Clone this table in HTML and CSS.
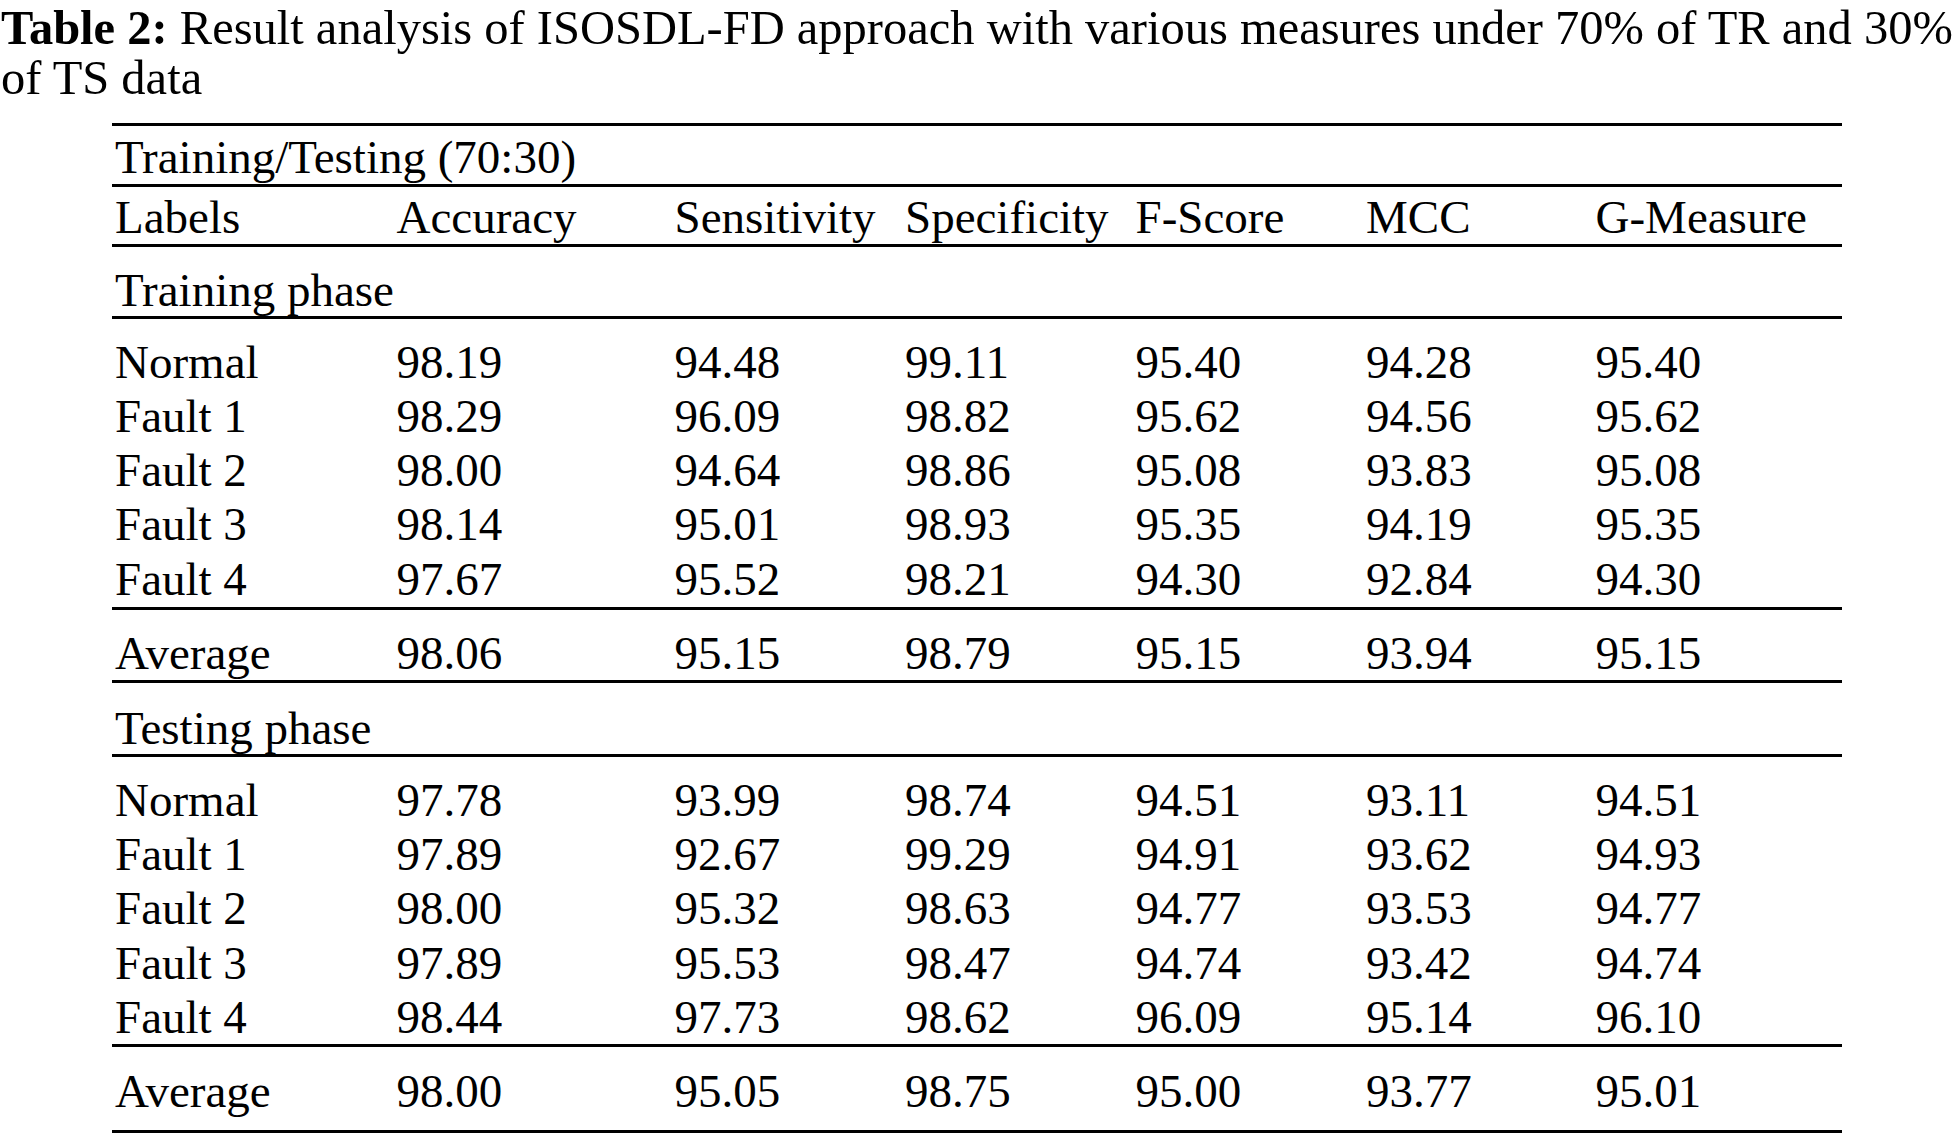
FILE: index.html
```html
<!DOCTYPE html>
<html lang="en">
<head>
<meta charset="utf-8">
<title>Table 2</title>
<link rel="stylesheet" href="styles.css">
</head>
<body>
<div class="page">
  <p class="caption"><b>Table 2:</b> Result analysis of ISOSDL-FD approach with various measures under 70% of TR and 30%<br>of TS data</p>
  <table class="results">
    <colgroup>
      <col class="c1"><col class="c2"><col class="c3"><col class="c4"><col class="c5"><col class="c6"><col class="c7">
    </colgroup>
    <tbody>
      <tr class="r-title ruled top-ruled"><td colspan="7">Training/Testing (70:30)</td></tr>
      <tr class="r-labels ruled"><td>Labels</td><td>Accuracy</td><td>Sensitivity</td><td>Specificity</td><td>F-Score</td><td>MCC</td><td>G-Measure</td></tr>
      <tr class="r-phase ruled"><td colspan="7">Training phase</td></tr>
      <tr class="r-first"><td>Normal</td><td>98.19</td><td>94.48</td><td>99.11</td><td>95.40</td><td>94.28</td><td>95.40</td></tr>
      <tr class="r-data"><td>Fault 1</td><td>98.29</td><td>96.09</td><td>98.82</td><td>95.62</td><td>94.56</td><td>95.62</td></tr>
      <tr class="r-data"><td>Fault 2</td><td>98.00</td><td>94.64</td><td>98.86</td><td>95.08</td><td>93.83</td><td>95.08</td></tr>
      <tr class="r-data"><td>Fault 3</td><td>98.14</td><td>95.01</td><td>98.93</td><td>95.35</td><td>94.19</td><td>95.35</td></tr>
      <tr class="r-last ruled"><td>Fault 4</td><td>97.67</td><td>95.52</td><td>98.21</td><td>94.30</td><td>92.84</td><td>94.30</td></tr>
      <tr class="r-avg ruled"><td>Average</td><td>98.06</td><td>95.15</td><td>98.79</td><td>95.15</td><td>93.94</td><td>95.15</td></tr>
      <tr class="r-phase2 ruled"><td colspan="7">Testing phase</td></tr>
      <tr class="r-first2"><td>Normal</td><td>97.78</td><td>93.99</td><td>98.74</td><td>94.51</td><td>93.11</td><td>94.51</td></tr>
      <tr class="r-data"><td>Fault 1</td><td>97.89</td><td>92.67</td><td>99.29</td><td>94.91</td><td>93.62</td><td>94.93</td></tr>
      <tr class="r-data"><td>Fault 2</td><td>98.00</td><td>95.32</td><td>98.63</td><td>94.77</td><td>93.53</td><td>94.77</td></tr>
      <tr class="r-data"><td>Fault 3</td><td>97.89</td><td>95.53</td><td>98.47</td><td>94.74</td><td>93.42</td><td>94.74</td></tr>
      <tr class="r-last2 ruled"><td>Fault 4</td><td>98.44</td><td>97.73</td><td>98.62</td><td>96.09</td><td>95.14</td><td>96.10</td></tr>
      <tr class="r-avg2 ruled"><td>Average</td><td>98.00</td><td>95.05</td><td>98.75</td><td>95.00</td><td>93.77</td><td>95.01</td></tr>
    </tbody>
  </table>
</div>
</body>
</html>
```

FILE: styles.css
```css
html, body {
  margin: 0;
  padding: 0;
  background: #ffffff;
}

.page {
  width: 1954px;
  color: #000000;
  font-family: "Liberation Serif", "Times New Roman", serif;
}

.caption {
  margin: 0;
  padding: 2.5px 0 0 1px;
  font-size: 48.5px;
  line-height: 50px;
  white-space: nowrap;
}

.caption b {
  font-weight: bold;
}

.results {
  margin: 20.5px 0 0 112px;
  width: 1730px;
  border-collapse: separate;
  border-spacing: 0;
  table-layout: fixed;
  font-size: 47px;
  line-height: 54.2px;
}

.c1 { width: 281.5px; }
.c2 { width: 278px; }
.c3 { width: 230.5px; }
.c4 { width: 230.5px; }
.c5 { width: 230.5px; }
.c6 { width: 229.5px; }
.c7 { width: 249.5px; }

.results td {
  padding: 0 0 0 3px;
  white-space: nowrap;
  vertical-align: top;
}

.ruled td { border-bottom: 3px solid #000000; }
.top-ruled td { border-top: 3px solid #000000; }

.r-title td  { padding-top: 3.8px; padding-bottom: 0; }
.r-labels td { padding-top: 2.8px; padding-bottom: 0; }
.r-phase td  { padding-top: 17px; padding-bottom: 0; line-height: 52px; }
.r-first td  { padding-top: 15.7px; }
.r-last td   { padding-bottom: 1.4px; }
.r-avg td    { padding-top: 16.5px; padding-bottom: 0; line-height: 53.5px; }
.r-phase2 td { padding-top: 18.8px; padding-bottom: 0.2px; line-height: 52px; }
.r-first2 td { padding-top: 15.9px; }
.r-last2 td  { padding-bottom: 0.5px; }
.r-avg2 td   { padding-top: 16.9px; padding-bottom: 11.9px; }
```
